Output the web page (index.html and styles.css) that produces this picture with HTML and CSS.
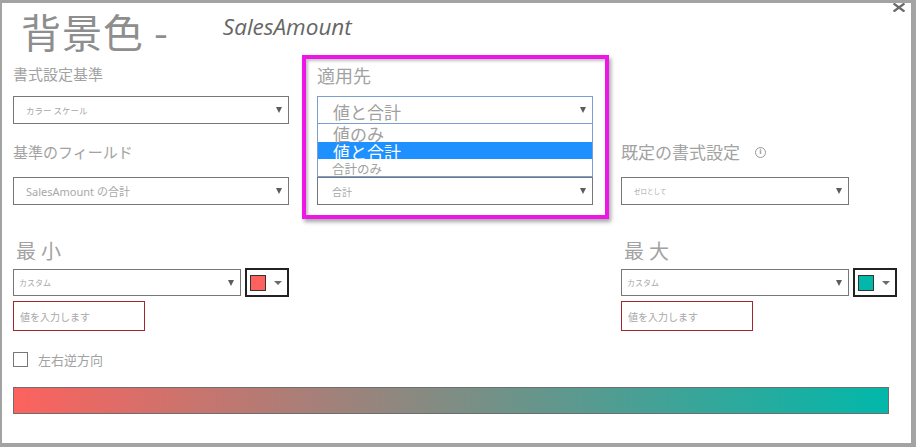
FILE: index.html
```html
<!DOCTYPE html>
<html lang="ja">
<head>
<meta charset="utf-8">
<title>背景色</title>
<link rel="stylesheet" href="styles.css">
</head>
<body>
<div class="dialog">
  <svg class="close" width="12" height="9" viewBox="0 0 12 9"><path d="M0.5 0.5 L11.5 8.5 M11.5 0.5 L0.5 8.5" stroke="#6b6b6b" stroke-width="2.4" fill="none"/></svg>
  <header class="title-row">
    <h1 class="title">背景色 -</h1>
    <span class="measure">SalesAmount</span>
  </header>

  <div class="columns">
    <div class="col col-left">
      <div class="label">書式設定基準</div>
      <div class="select s-first"><span class="val tiny">カラー スケール</span><i class="arrow"></i></div>
      <div class="label l-second">基準のフィールド</div>
      <div class="select s-second"><span class="val small">SalesAmount の合計</span><i class="arrow"></i></div>
    </div>

    <div class="apply-box">
      <div class="label big">適用先</div>
      <div class="select-wrap">
        <div class="select focused"><span class="val large">値と合計</span><i class="arrow"></i></div>
        <ul class="options">
          <li class="opt o1">値のみ</li>
          <li class="opt o2 selected">値と合計</li>
          <li class="opt o3">合計のみ</li>
        </ul>
      </div>
      <div class="select s-total"><span class="val sum">合計</span><i class="arrow"></i></div>
    </div>

    <div class="col col-right">
      <div class="label mid">既定の書式設定<span class="info">i</span></div>
      <div class="select s-second narrow"><span class="val zero">ゼロとして</span><i class="arrow"></i></div>
    </div>
  </div>

  <div class="range-row">
    <div class="range-block">
      <div class="range-label">最小</div>
      <div class="controls">
        <div class="select narrow short"><span class="val custom">カスタム</span><i class="arrow"></i></div>
        <div class="picker"><span class="swatch red"></span><i class="arrow flat"></i></div>
      </div>
      <div class="input">値を入力します</div>
      <label class="check"><span class="box"></span><span class="check-text">左右逆方向</span></label>
    </div>
    <div class="range-block right">
      <div class="range-label">最大</div>
      <div class="controls">
        <div class="select narrow short"><span class="val custom">カスタム</span><i class="arrow"></i></div>
        <div class="picker"><span class="swatch teal"></span><i class="arrow flat"></i></div>
      </div>
      <div class="input">値を入力します</div>
    </div>
  </div>

  <div class="gradient"></div>
</div>
</body>
</html>
```

FILE: styles.css
```css
* { box-sizing: border-box; }
html, body { margin: 0; padding: 0; background: #fff; }
body { font-family: "Noto Sans CJK JP", "Noto Sans", sans-serif; }

.dialog {
  position: relative;
  width: 916px;
  height: 447px;
  border-style: solid;
  border-color: #a3a3a3;
  border-width: 3px 5px 4px 2px;
  background: #fff;
  overflow: hidden;
}

.close { position: absolute; top: 0; right: 6px; }

.title-row { display: flex; align-items: flex-start; height: 52px; padding: 4px 0 0 19px; }
.title { margin: 0; font-weight: normal; font-size: 40px; line-height: 48px; letter-spacing: 1px; color: #8e8e8e; }
.measure { margin: 5px 0 0 54px; font-family: "Open Sans", "Noto Sans", sans-serif; font-style: italic; font-size: 22.5px; line-height: 30px; color: #666; }

.columns { display: flex; align-items: flex-start; padding-left: 11px; }
.col-left { width: 276px; margin-right: 13px; padding-top: 9px; }
.col-right { width: 276px; margin-left: 12px; padding-top: 87px; }

.label { font-size: 15px; line-height: 20px; color: #a2a2a2; white-space: nowrap; }
.label.big { font-size: 18px; line-height: 22px; }
.label.mid { font-size: 17px; line-height: 20px; display: flex; align-items: center; }
.l-second { margin-top: 18px; }

.info {
  display: inline-flex; align-items: center; justify-content: center;
  width: 11px; height: 11px; margin-left: 15px; margin-top: 1px;
  border: 1px solid #9a9a9a; border-radius: 50%;
  font-family: "DejaVu Sans", sans-serif; font-size: 7px; font-weight: bold; line-height: 1; color: #9a9a9a;
}

.select {
  display: flex; align-items: center; justify-content: space-between;
  height: 28px; border: 1px solid #777; padding: 0 6px 0 12px; background: #fff;
  white-space: nowrap;
}
.select.narrow { width: 228px; }
.select.short { height: 27px; padding-left: 5px; }
.s-first { margin-top: 12px; }
.s-second { margin-top: 15px; }

.val { color: #a8a8a8; }
.val.tiny { font-size: 8.5px; }
.val.small { font-family: "Noto Sans", "Noto Sans CJK JP", sans-serif; font-size: 11px; }
.val.zero { font-size: 6.5px; }
.val.custom { font-size: 8px; }
.val.sum { font-size: 10px; }
.val.large { font-size: 17px; line-height: 26px; padding-top: 2px; color: #a0a0a0; }

.arrow { display: block; width: 0; height: 0; border-left: 3.5px solid transparent; border-right: 3.5px solid transparent; border-top: 6px solid #5c5c5c; }
.arrow.flat { border-left-width: 4px; border-right-width: 4px; border-top: 4px solid #6a6a6a; }

.apply-box {
  width: 307px;
  border: 4px solid #ee16e6;
  padding: 5px 12px 10px 11px;
  box-shadow: 2px 3px 4px rgba(0,0,0,0.35), inset 2px 2px 3px rgba(0,0,0,0.25);
  background: #fff;
}
.select-wrap { position: relative; margin-top: 10px; }
.select.focused { border-color: #7c9fd3; align-items: flex-start; overflow: hidden; padding-left: 15px; }
.select.focused .arrow { margin-top: 10px; }
.options {
  position: absolute; left: 0; right: 0; top: 100%;
  margin: 0; padding: 0; list-style: none;
  border: 1px solid #7c9fd3; border-top: none; background: #fff;
  height: 53px; z-index: 2;
}
.opt { padding-left: 15px; color: #a0a0a0; white-space: nowrap; overflow: visible; }
.o1 { height: 18px; font-size: 17px; line-height: 20px; }
.o2 { height: 17px; font-size: 17px; line-height: 19px; }
.o3 { height: 17px; font-size: 12.5px; line-height: 19px; padding-left: 14px; }
.opt.selected { background: #1e90ff; color: #fff; }
.s-total { margin-top: 53px; padding-left: 14px; }

.range-row { display: flex; align-items: flex-start; padding-left: 11px; }
.range-block { width: 276px; }
.range-block.right { margin-left: 332px; }
.range-label { margin-top: 20px; padding-left: 3px; font-size: 20px; line-height: 24px; letter-spacing: 5px; color: #a2a2a2; }
.controls { display: flex; align-items: center; gap: 4px; margin-top: 5px; }
.picker { display: flex; align-items: center; width: 44px; height: 29px; border: 2px solid #222; padding-left: 3px; }
.swatch { width: 16px; height: 16px; border: 1px solid #333; margin-right: 8px; }
.swatch.red { background: #fd625e; }
.swatch.teal { background: #01b8aa; }
.input {
  width: 132px; height: 30px; margin-top: 4px;
  border: 1px solid #a4262c; padding-left: 6px;
  display: flex; align-items: center; font-size: 10px; color: #a8a8a8;
}
.check { display: flex; align-items: center; margin-top: 21px; }
.box { width: 15px; height: 15px; border: 1px solid #777; }
.check-text { margin-left: 10px; font-size: 13px; line-height: 15px; color: #a2a2a2; }

.gradient {
  width: 876px; height: 27px; margin: 20px 0 0 11px;
  border: 1px solid #6e6e6e;
  background: linear-gradient(to right, #fd625e, #01b8aa);
}
```
